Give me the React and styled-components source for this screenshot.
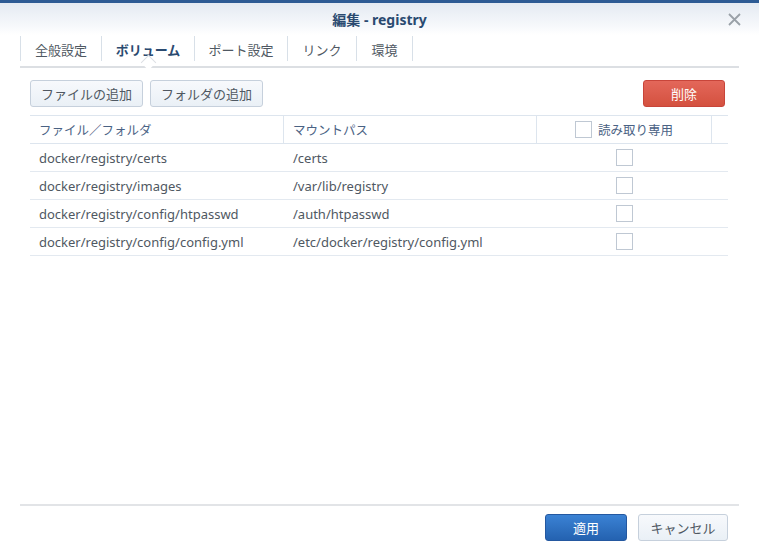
import styled, { createGlobalStyle } from 'styled-components';

const GlobalStyle = createGlobalStyle`
  html, body { margin: 0; padding: 0; background: #fff; }
  body {
    font-family: "Noto Sans", "Noto Sans CJK JP", sans-serif;
    font-size: 13px;
    color: #4f5862;
  }
`;

const Dialog = styled.div`
  width: 759px;
  height: 550px;
  display: flex;
  flex-direction: column;
  background: #fff;
  overflow: hidden;
`;

const Header = styled.div`
  position: relative;
  height: 32px;
  border-top: 3px solid #2d5b94;
  background: linear-gradient(to bottom, #e4eaf2 0%, #f6f8fb 70%, #ffffff 100%);
  display: flex;
  align-items: center;
  justify-content: center;
`;

const Title = styled.div`
  font-family: "Noto Sans", "Noto Sans CJK JP", sans-serif;
  font-weight: bold;
  font-size: 14px;
  color: #2a4a70;
  margin-top: -1px;
`;

const Close = styled.svg`
  position: absolute;
  right: 18px;
  top: 10px;
`;

const TabBar = styled.div`
  position: relative;
  margin: 0 20px;
  height: 31px;
  display: flex;
  align-items: flex-start;
  border-bottom: 2px solid #dcdfe3;
`;

const Tab = styled.div`
  position: relative;
  height: 25px;
  margin-top: 1px;
  padding-top: 1px;
  display: flex;
  align-items: center;
  justify-content: center;
  width: ${p => p.w}px;
  border-left: 1px solid #d8e0e8;
  border-right: ${p => (p.last ? '1px solid #d8e0e8' : 'none')};
  box-sizing: border-box;
  font-size: 13px;
  font-weight: ${p => (p.active ? 'bold' : 'normal')};
  color: ${p => (p.active ? '#2a4a70' : '#4f5862')};
  font-family: "Noto Sans CJK JP", sans-serif;
`;

const Notch = styled.div`
  position: absolute;
  left: 50%;
  bottom: -7px;
  width: 10px;
  height: 10px;
  margin-left: -5px;
  background: #fff;
  border-left: 1px solid #dcdfe3;
  border-top: 1px solid #dcdfe3;
  transform: rotate(45deg);
`;

const Body = styled.div`
  flex: 1;
  padding: 12px 31px 0 30px;
  display: flex;
  flex-direction: column;
`;

const Toolbar = styled.div`
  display: flex;
  align-items: center;
  gap: 7px;
  height: 27px;
  padding-right: 3px;
`;

const Button = styled.button`
  height: 27px;
  box-sizing: border-box;
  padding: 0 ${p => p.pad ?? 10}px;
  width: ${p => (p.w ? p.w + 'px' : 'auto')};
  border-radius: 3px;
  font-family: "Noto Sans CJK JP", sans-serif;
  font-size: 13px;
  cursor: pointer;
  border: 1px solid ${p => (p.kind === 'red' ? '#c8453a' : p.kind === 'blue' ? '#2458a0' : '#c6d0dc')};
  color: ${p => (p.kind ? '#fff' : '#4f5862')};
  background: ${p =>
    p.kind === 'red'
      ? 'linear-gradient(to bottom, #e3675a, #d4513f)'
      : p.kind === 'blue'
      ? 'linear-gradient(to bottom, #3b82d4, #2462b0)'
      : 'linear-gradient(to bottom, #f7f9fc, #eaf0f6)'};
`;

const Spacer = styled.div`
  flex: 1;
`;

const Table = styled.div`
  margin-top: 8px;
  border-top: 1px solid #dde5ee;
  display: grid;
  grid-template-columns: 254px 253px 175px 16px;
`;

const HeadCell = styled.div`
  height: 27px;
  display: flex;
  align-items: center;
  justify-content: ${p => (p.center ? 'center' : 'flex-start')};
  padding-left: ${p => (p.center ? 0 : 9)}px;
  gap: 6px;
  border-right: ${p => (p.last ? 'none' : '1px solid #dde5ee')};
  border-bottom: 1px solid #dde5ee;
  font-family: "Noto Sans CJK JP", sans-serif;
  font-size: 12.5px;
  color: #4a6284;
`;

const Cell = styled.div`
  height: 27px;
  display: flex;
  align-items: center;
  justify-content: ${p => (p.center ? 'center' : 'flex-start')};
  padding-left: ${p => (p.center ? 0 : 9)}px;
  border-bottom: 1px solid #e3e9f0;
  font-size: 13px;
  color: #4f5862;
`;

const Check = styled.span`
  display: inline-block;
  width: 17px;
  height: 17px;
  box-sizing: border-box;
  border: 1px solid #bfc8d3;
  background: #fff;
`;

const Footer = styled.div`
  margin: 0 20px;
  box-sizing: border-box;
  border-top: 2px solid #e2e4e7;
  height: 46px;
  display: flex;
  align-items: flex-start;
  justify-content: flex-end;
  gap: 11px;
  padding: 8px 11px 0 0;
`;

const rows = [
  ['docker/registry/certs', '/certs'],
  ['docker/registry/images', '/var/lib/registry'],
  ['docker/registry/config/htpasswd', '/auth/htpasswd'],
  ['docker/registry/config/config.yml', '/etc/docker/registry/config.yml'],
];

const tabs = [
  ['全般設定', 81],
  ['ボリューム', 93],
  ['ポート設定', 93],
  ['リンク', 69],
  ['環境', 57],
];

export default function App() {
  return (
    <Dialog>
      <GlobalStyle />
      <Header>
        <Title>編集 - registry</Title>
        <Close width="13" height="13" viewBox="0 0 13 13">
          <path d="M1 1 L12 12 M12 1 L1 12" stroke="#9aa1a8" strokeWidth="1.8" />
        </Close>
      </Header>
      <TabBar>
        {tabs.map(([t, w], i) => (
          <Tab key={t} w={w} active={i === 1} last={i === tabs.length - 1}>
            {t}
            {i === 1 && <Notch />}
          </Tab>
        ))}
      </TabBar>
      <Body>
        <Toolbar>
          <Button w={113}>ファイルの追加</Button>
          <Button w={113}>フォルダの追加</Button>
          <Spacer />
          <Button kind="red" w={82}>削除</Button>
        </Toolbar>
        <Table>
          <HeadCell>ファイル／フォルダ</HeadCell>
          <HeadCell>マウントパス</HeadCell>
          <HeadCell center>
            <Check />
            読み取り専用
          </HeadCell>
          <HeadCell last />
          {rows.map(([a, b]) => [
            <Cell key={a + 'a'}>{a}</Cell>,
            <Cell key={a + 'b'}>{b}</Cell>,
            <Cell key={a + 'c'} center>
              <Check />
            </Cell>,
            <Cell key={a + 'd'} />,
          ])}
        </Table>
      </Body>
      <Footer>
        <Button kind="blue" w={82}>適用</Button>
        <Button w={90}>キャンセル</Button>
      </Footer>
    </Dialog>
  );
}
